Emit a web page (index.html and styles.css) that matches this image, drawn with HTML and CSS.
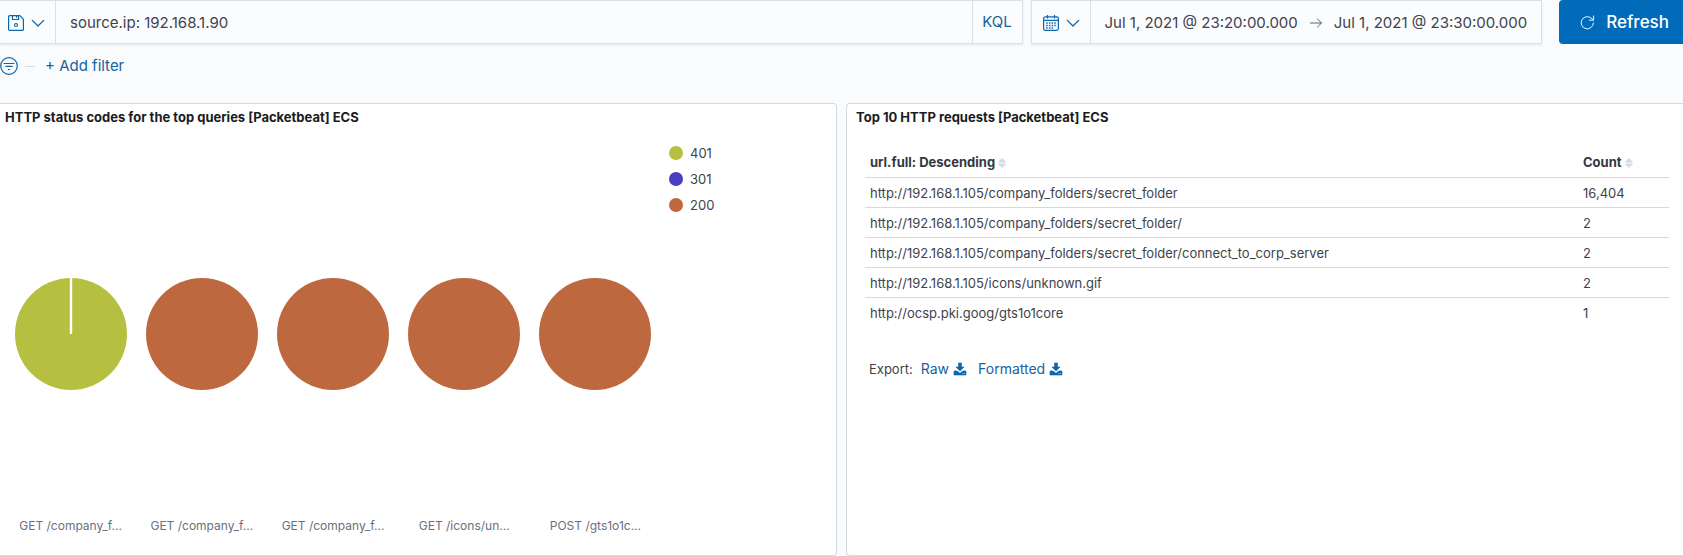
FILE: index.html
```
<!DOCTYPE html>
<html lang="en">
<head>
<meta charset="utf-8">
<title>Packetbeat HTTP dashboard</title>
<link rel="stylesheet" href="styles.css">
</head>
<body>
<svg class="sprite" aria-hidden="true">
  <symbol id="chevron" viewBox="0 0 16 16"><path d="M1.500 5L8 11.500 14.500 5" fill="none" stroke="currentColor" stroke-width="1.500" stroke-linecap="round" stroke-linejoin="round"/></symbol>
  <symbol id="download" viewBox="0 0 14 14"><path d="M5.500 1h3v4H11L7 9 3 5h2.500zM1 9h3.200L7 11.300 9.800 9H13v4H1z" fill="currentColor" stroke="currentColor" stroke-width=".6" stroke-linejoin="round"/><path d="M9.500 11.500h.8M11.300 11.500h.8" stroke="#fff" stroke-width=".8"/></symbol>
  <symbol id="sort" viewBox="0 0 8 12"><path d="M4 1.500l3.500 3.500h-7zM.5 7h7L4 10.500z" fill="currentColor" stroke="currentColor" stroke-linejoin="round"/></symbol>
</svg>
<header class="top-bar">
  <form class="query-group">
    <button class="menu-button" type="button" aria-label="Saved queries">
      <svg class="icon" viewBox="0 0 16 16" fill="none" stroke="currentColor" stroke-width="1.200"><path d="M1.600 .6h10.200l3.600 3.600v10.200a1 1 0 0 1-1 1H1.600a1 1 0 0 1-1-1V1.600a1 1 0 0 1 1-1z"/><path d="M4.500 .5v4h6v-4M8.500 1v1.800"/><circle cx="8" cy="10" r="1.500"/></svg>
      <svg class="chevron"><use href="#chevron"/></svg>
    </button>
    <input class="query-input" type="text" value="source.ip: 192.168.1.90" aria-label="Search query">
    <button class="language" type="button">KQL</button>
  </form>
  <div class="date-group">
    <button class="menu-button" type="button" aria-label="Quick date ranges">
      <svg class="icon" viewBox="0 0 16 16" fill="none" stroke="currentColor" stroke-width="1.200"><rect x=".6" y="1.800" width="14.800" height="13.600" rx="1.800"/><path d="M1 5.300h14M4.500 0v3.500M11.500 0v3.500"/><path d="M3.200 8h10M3.200 10.500h10M3.200 13h7.500" stroke-dasharray="1.500 1.200" stroke-width="1.300"/></svg>
      <svg class="chevron"><use href="#chevron"/></svg>
    </button>
    <button class="date" type="button">Jul 1, 2021 @ 23:20:00.000</button>
    <svg class="arrow" viewBox="0 0 12 12" fill="none" stroke="currentColor"><path d="M.5 6h11M7.500 2l4 4-4 4" stroke-linecap="round" stroke-linejoin="round"/></svg>
    <button class="date" type="button">Jul 1, 2021 @ 23:30:00.000</button>
  </div>
  <button class="refresh" type="button">
    <svg class="refresh-icon" viewBox="0 0 16 16" fill="none" stroke="currentColor" stroke-linecap="round" stroke-linejoin="round"><path d="M14.300 8.500A6.500 6.500 0 1 1 11.600 3L14 5M14.500 1v4.500H10"/></svg>
    Refresh
  </button>
</header>
<div class="filter-bar">
  <button class="filter-menu" type="button" aria-label="Filter options">
    <svg viewBox="0 0 18 18" fill="none" stroke="currentColor" stroke-width="1.200"><circle cx="9" cy="9" r="8.300"/><path d="M4 6.500h10M5.800 9.300h6.400M8.300 12.500h1.400" stroke-linecap="round"/></svg>
  </button>
  <span class="filter-rule"></span>
  <button class="add-filter" type="button">+ Add filter</button>
</div>
<main class="panels">
  <section class="panel panel-chart">
    <h2>HTTP status codes for the top queries [Packetbeat] ECS</h2>
    <div class="chart">
      <div class="pies">
        <figure><svg class="pie" viewBox="0 0 112 112"><circle class="c401" cx="56" cy="56" r="56"/><path d="M56 0v56" stroke="#fff" stroke-width="2.400"/></svg><figcaption>GET /company_f...</figcaption></figure>
        <figure><svg class="pie" viewBox="0 0 112 112"><circle class="c200" cx="56" cy="56" r="56"/></svg><figcaption>GET /company_f...</figcaption></figure>
        <figure><svg class="pie" viewBox="0 0 112 112"><circle class="c200" cx="56" cy="56" r="56"/></svg><figcaption>GET /company_f...</figcaption></figure>
        <figure><svg class="pie" viewBox="0 0 112 112"><circle class="c200" cx="56" cy="56" r="56"/></svg><figcaption>GET /icons/un...</figcaption></figure>
        <figure><svg class="pie" viewBox="0 0 112 112"><circle class="c200" cx="56" cy="56" r="56"/></svg><figcaption>POST /gts1o1c...</figcaption></figure>
      </div>
      <ul class="legend">
        <li><svg class="dot" viewBox="0 0 14 14"><circle class="c401" cx="7" cy="7" r="7"/></svg>401</li>
        <li><svg class="dot" viewBox="0 0 14 14"><circle class="c301" cx="7" cy="7" r="7"/></svg>301</li>
        <li><svg class="dot" viewBox="0 0 14 14"><circle class="c200" cx="7" cy="7" r="7"/></svg>200</li>
      </ul>
    </div>
  </section>
  <section class="panel panel-table">
    <h2>Top 10 HTTP requests [Packetbeat] ECS</h2>
    <div class="table-area">
      <table>
        <thead>
          <tr><th scope="col">url.full: Descending<svg class="sort"><use href="#sort"/></svg></th><th class="count" scope="col">Count<svg class="sort"><use href="#sort"/></svg></th></tr>
        </thead>
        <tbody>
          <tr><td>http://192.168.1.105/company_folders/secret_folder</td><td>16,404</td></tr>
          <tr><td>http://192.168.1.105/company_folders/secret_folder/</td><td>2</td></tr>
          <tr><td>http://192.168.1.105/company_folders/secret_folder/connect_to_corp_server</td><td>2</td></tr>
          <tr><td>http://192.168.1.105/icons/unknown.gif</td><td>2</td></tr>
          <tr><td>http://ocsp.pki.goog/gts1o1core</td><td>1</td></tr>
        </tbody>
      </table>
      <div class="export">
        <span>Export:</span>
        <a href="#raw">Raw<svg class="download"><use href="#download"/></svg></a>
        <a href="#formatted">Formatted<svg class="download"><use href="#download"/></svg></a>
      </div>
    </div>
  </section>
</main>
</body>
</html>
```
FILE: styles.css
```
* { box-sizing: border-box; }
body {
  margin: 0;
  min-height: 100vh;
  display: flex;
  flex-direction: column;
  background: #fafbfd;
  color: #40434c;
  font-family: Inter, "Liberation Sans", sans-serif;
  font-size: 13px;
  line-height: 20px;
}
button, input {
  margin: 0;
  padding: 0;
  border: 0;
  background: none;
  color: inherit;
  font: inherit;
}
svg { display: block; flex: none; }
.sprite { position: absolute; width: 0; height: 0; }

.top-bar { display: flex; height: 44px; font-size: 15px; }
.query-group, .date-group {
  display: flex;
  align-items: stretch;
  background: #fbfcfd;
  border: 1px solid #dadfe9;
  box-shadow: 0 1px 2px rgba(152, 162, 179, .2);
}
.query-group { flex: 1; border-left: 0; margin-right: 8px; }
.menu-button {
  display: flex;
  align-items: center;
  gap: 7px;
  padding: 2px 10px 0 8px;
  border-right: 1px solid #dadfe9;
  color: #0a67ae;
}
.date-group .menu-button { padding-left: 11px; }
.icon { width: 16px; height: 16px; }
.chevron { width: 14px; height: 14px; }
.query-input { flex: 1; min-width: 0; padding: 2px 14px 0; outline: 0; }
.language {
  width: 50px;
  border-left: 1px solid #dadfe9;
  color: #17629f;
}
.date { padding: 2px 14px 0; }
.arrow { width: 12px; height: 12px; align-self: center; margin: 2px -2px 0; color: #5a606b; }
.refresh {
  display: flex;
  align-items: center;
  gap: 11px;
  margin-left: 17px;
  padding: 0 14px 0 21px;
  border-radius: 4px 0 0 4px;
  background: #006bb8;
  color: #fff;
  font-size: 17px;
  font-weight: 500;
}
.refresh-icon { width: 15px; height: 15px; }

.filter-bar { display: flex; align-items: center; height: 44px; margin-bottom: 15px; font-size: 15px; }
.filter-menu { color: #0a67ae; }
.filter-menu svg { width: 18px; height: 18px; }
.filter-rule { width: 10px; height: 1px; margin: 0 10px 0 7px; background: #d3dae6; }
.add-filter { color: #17629f; }

.panels { flex: 1; display: grid; grid-template-columns: 837fr 837fr; gap: 9px; }
.panel {
  display: flex;
  flex-direction: column;
  min-width: 0;
  background: #fff;
  border: 1px solid #d3d9e2;
}
.panel-chart { border-left: 0; border-radius: 0 4px 4px 0; }
.panel-table { border-right: 0; border-radius: 4px 0 0 4px; }
h2 { margin: 0; padding: 3px 5px 5px; color: #1a1c21; font-size: 13px; font-weight: 700; }
.panel-table h2 { padding-left: 9px; }

.chart { flex: 1; display: grid; grid-template-columns: 656fr 175fr; padding-left: 5px; }
.pies { display: grid; grid-template-columns: repeat(5, 1fr); }
figure { margin: 0; display: flex; flex-direction: column; align-items: center; padding: 20px 0 19px; }
.pie { width: 112px; height: 112px; margin: auto; }
figcaption { color: #69707d; font-size: 12px; }
.legend {
  margin: 0;
  padding: 8px;
  list-style: none;
}
.legend li { display: flex; align-items: center; gap: 7px; height: 26px; }
.dot { width: 14px; height: 14px; }
.c401 { fill: #b7bf40; }
.c301 { fill: #493fc4; }
.c200 { fill: #bd683f; }

.table-area { padding: 15px 14px 0 18px; }
table { width: 100%; border-collapse: collapse; }
th, td { height: 30px; padding: 0 5px; text-align: left; }
td { padding-top: 2px; }
th { color: #343741; font-weight: 700; }
.count { width: 91px; }
tbody tr { border-top: 1px solid #d3dae6; }
.sort { display: inline-block; width: 8px; height: 12px; margin-left: 3px; vertical-align: -2px; color: #d5d9e3; }
.export { display: flex; gap: 8px; padding: 32px 4px 0; }
.export a {
  display: flex;
  align-items: center;
  gap: 4px;
  margin-right: 3px;
  color: #17629f;
  font-size: 14px;
  text-decoration: none;
}
.download { width: 14px; height: 14px; color: #0a67ae; }
```
